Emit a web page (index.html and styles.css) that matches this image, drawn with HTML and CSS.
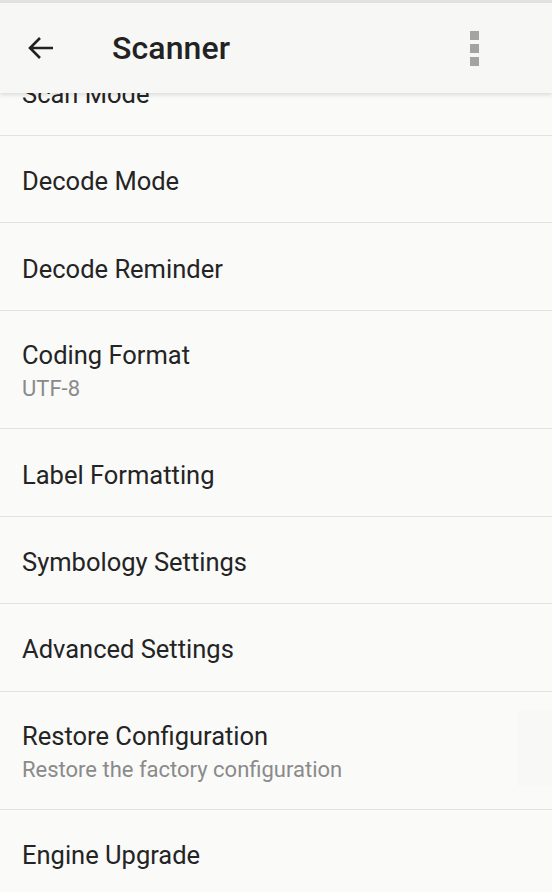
FILE: index.html
```html
<!DOCTYPE html>
<html>
<head>
<meta charset="utf-8">
<link rel="stylesheet" href="styles.css">
</head>
<body>
<div class="status"></div>
<header class="toolbar">
  <svg class="back" width="28" height="28" viewBox="0 0 28 28"><path d="M26 14H3M13 4L3 14l10 10" fill="none" stroke="#222" stroke-width="2.6"/></svg>
  <h1 class="title">Scanner</h1>
  <div class="menu"><span></span><span></span><span></span></div>
</header>
<ul class="list">
  <li class="item"><div class="label">Scan Mode</div></li>
  <li class="item"><div class="label">Decode Mode</div></li>
  <li class="item"><div class="label">Decode Reminder</div></li>
  <li class="item two"><div class="label">Coding Format</div><div class="sub">UTF-8</div></li>
  <li class="item"><div class="label">Label Formatting</div></li>
  <li class="item"><div class="label">Symbology Settings</div></li>
  <li class="item"><div class="label">Advanced Settings</div></li>
  <li class="item two ripple"><div class="label">Restore Configuration</div><div class="sub">Restore the factory configuration</div></li>
  <li class="item"><div class="label">Engine Upgrade</div></li>
</ul>
</body>
</html>
```
FILE: styles.css
```css
html, body { margin: 0; padding: 0; }
body {
  background: #fafaf9;
  font-family: Roboto, "Noto Sans", sans-serif;
  width: 552px;
  height: 892px;
  overflow: hidden;
  position: relative;
}
.status { height: 3px; background: #e2e2e2; position: relative; z-index: 3; }
.toolbar {
  position: absolute;
  top: 3px; left: 0; right: 0;
  height: 90px;
  background: #f7f7f5;
  box-shadow: 0 2px 4px rgba(0,0,0,0.12);
  display: flex;
  align-items: center;
  z-index: 2;
}
.back { margin-left: 27px; flex: none; }
.title {
  margin: 0 0 0 57px;
  font-size: 32px;
  font-weight: 500;
  color: #222;
  flex: 1;
  letter-spacing: 0.1px;
}
.menu {
  display: flex; flex-direction: column; gap: 4px;
  margin-right: 73px;
}
.menu span { width: 9px; height: 9px; background: #a3a3a3; }
.list { list-style: none; margin: 45.6px 0 0 0; padding: 0; }
.item {
  height: 87.4px;
  border-bottom: 1px solid #e2e2e2;
  display: flex; flex-direction: column; justify-content: center;
  padding: 4px 0 0 22px;
  box-sizing: border-box;
  position: relative;
}
.item.two { height: 118.6px; padding-top: 3px; }
.label { font-size: 25.5px; line-height: 30px; color: #242424; }
.sub { font-size: 22px; line-height: 26px; color: #8a8a8a; margin-top: 5.4px; }
.ripple::after {
  content: "";
  position: absolute;
  right: 0; top: 19px;
  width: 35px; height: 75px;
  background: #f8f8f7;
}
```
